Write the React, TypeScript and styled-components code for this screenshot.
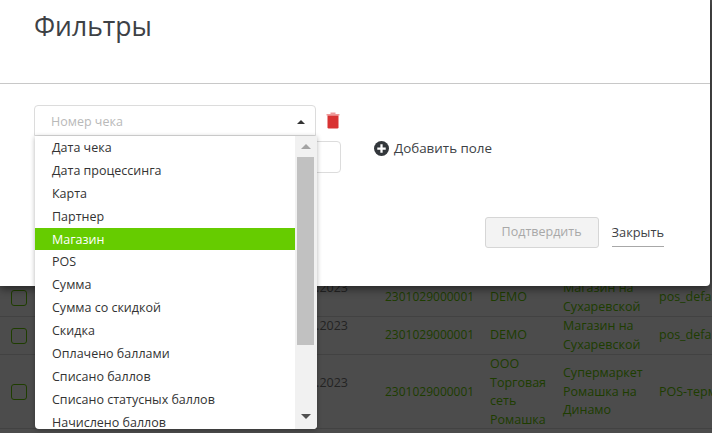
import styled, { createGlobalStyle } from "styled-components";

const GlobalStyle = createGlobalStyle`
  html, body {
    margin: 0;
    padding: 0;
    height: 100%;
    overflow: hidden;
    background: #fff;
    font-family: "Open Sans", "Liberation Sans", sans-serif;
  }
  * {
    box-sizing: border-box;
  }
`;

const Page = styled.div`
  position: relative;
  width: 712px;
  height: 433px;
  overflow: hidden;
`;

const TableBox = styled.div`
  padding-top: 279px;
  color: #66cc00;
  font-size: 12.5px;
  line-height: 18.5px;
`;

const Row = styled.div<{ $height: number }>`
  display: grid;
  grid-template-columns: 11px 16px 321px 37px 105px 73px 96px 1fr;
  height: ${(props) => props.$height}px;
  align-items: center;
  border-bottom: 1px solid #dedede;
  overflow: hidden;
`;

const CheckCell = styled.span`
  grid-column: 2;
  width: 16px;
  height: 16px;
  border: 1px solid #66cc00;
  border-radius: 3px;
  background: #fff;
`;

const DateCell = styled.span`
  grid-column: 3;
  justify-self: end;
  color: #777;
  white-space: pre-line;
`;

const NumberCell = styled.span`
  grid-column: 5;
  font-size: 12px;
`;

const Cell = styled.span`
  white-space: pre-line;
`;

const PosCell = styled.span`
  white-space: nowrap;
`;

const Backdrop = styled.div`
  position: absolute;
  inset: 0;
  background: rgba(0, 0, 0, 0.7);
`;

const Modal = styled.div`
  position: absolute;
  top: 0;
  left: 0;
  width: 710px;
  height: 286px;
  background: #fff;
  border-radius: 0 0 4px 0;
  box-shadow: 0 3px 9px rgba(0, 0, 0, 0.5);
`;

const ModalHead = styled.header`
  height: 84px;
  padding: 8px 34px 0;
  border-bottom: 1px solid #c8c8c8;
`;

const Title = styled.h1`
  margin: 0;
  font-size: 26.5px;
  line-height: 36px;
  font-weight: 400;
  color: #3d4145;
`;

const ModalBody = styled.div`
  display: grid;
  grid-template-columns: 282px 1fr;
  padding: 21px 0 0 34px;
`;

const FieldColumn = styled.div`
  display: flex;
  flex-direction: column;
  gap: 5px;
`;

const SelectBox = styled.div`
  display: flex;
  align-items: center;
  justify-content: space-between;
  width: 282px;
  height: 31px;
  padding: 2px 10px 0 16px;
  border: 1px solid #dcdcdc;
  border-radius: 4px 4px 0 0;
  font-size: 12.5px;
  color: #b9b9b9;
`;

const Caret = styled.span`
  width: 0;
  height: 0;
  border-left: 4px solid transparent;
  border-right: 4px solid transparent;
  border-bottom: 4px solid #333;
`;

const ValueBox = styled.div`
  align-self: flex-end;
  width: 70px;
  height: 32px;
  margin-right: -25px;
  border: 1px solid #dcdcdc;
  border-radius: 4px;
`;

const Actions = styled.div`
  display: grid;
  grid-template-columns: 40px 1fr;
`;

const TrashButton = styled.span`
  display: flex;
  padding: 7px 0 0 10px;
`;

const AddField = styled.div`
  display: flex;
  align-items: center;
  gap: 5px;
  grid-column: 2;
  margin: 18px 0 0 18px;
  font-size: 13.4px;
  color: #3d4145;
`;

const Footer = styled.footer`
  display: flex;
  align-items: flex-start;
  justify-content: flex-end;
  gap: 13px;
  padding: 44px 46px 0 0;
`;

const ConfirmButton = styled.button`
  width: 114px;
  height: 31px;
  background: #f3f3f3;
  border: 1px solid #d6d6d6;
  border-radius: 3px;
  font: 400 12.5px "Open Sans", sans-serif;
  color: #a8a8a8;
  padding: 0 0 3px;
`;

const CloseLink = styled.a`
  display: block;
  height: 30px;
  padding-top: 6px;
  font-size: 12.8px;
  color: #3d4145;
  border-bottom: 1px solid #a8a8a8;
`;

const Dropdown = styled.div`
  position: absolute;
  top: 136px;
  left: 35px;
  width: 282px;
  height: 293px;
  display: flex;
  background: #fff;
  border-radius: 0 0 4px 4px;
  box-shadow: 0 1px 5px rgba(0, 0, 0, 0.3);
  overflow: hidden;
`;

const OptionList = styled.ul`
  flex: 1;
  margin: 0;
  padding: 0;
  list-style: none;
  overflow: hidden;
`;

const Option = styled.li<{ $active?: boolean }>`
  height: 22.9px;
  line-height: 22.9px;
  padding: 1px 0 0 17px;
  font-size: 12.5px;
  color: ${(props) => (props.$active ? "#fff" : "#333")};
  background: ${(props) => (props.$active ? "#66cc00" : "transparent")};
`;

const ScrollBar = styled.div`
  display: flex;
  flex-direction: column;
  width: 22px;
  background: #f1f1f1;
`;

const ScrollArrow = styled.span<{ $bottom?: boolean }>`
  display: flex;
  align-items: center;
  justify-content: center;
  height: 21px;
  margin-bottom: ${(props) => (props.$bottom ? "2px" : "0")};
`;

const ScrollThumb = styled.div`
  width: 17px;
  height: 188px;
  margin-left: 2px;
  background: #c1c1c1;
`;

const ScrollSpacer = styled.div`
  flex: 1;
`;

const ArrowGlyph = styled.span<{ $down?: boolean; $color: string }>`
  width: 0;
  height: 0;
  border-left: 5px solid transparent;
  border-right: 5px solid transparent;
  ${(props) =>
    props.$down
      ? `border-top: 5px solid ${props.$color};`
      : `border-bottom: 5px solid ${props.$color};`}
`;

const options = [
  "Дата чека",
  "Дата процессинга",
  "Карта",
  "Партнер",
  "Магазин",
  "POS",
  "Сумма",
  "Сумма со скидкой",
  "Скидка",
  "Оплачено баллами",
  "Списано баллов",
  "Списано статусных баллов",
  "Начислено баллов",
];

const rows = [
  { height: 38, org: "DEMO", shop: "Магазин на\nСухаревской", pos: "pos_default" },
  { height: 38, org: "DEMO", shop: "Магазин на\nСухаревской", pos: "pos_default" },
  {
    height: 74,
    org: "ООО\nТорговая\nсеть\nРомашка",
    shop: "Супермаркет\nРомашка на\nДинамо",
    pos: "POS-терминал",
  },
];

function App() {
  return (
    <Page>
      <GlobalStyle />
      <TableBox>
        {rows.map((row, i) => (
          <Row key={i} $height={row.height}>
            <CheckCell />
            <DateCell>{"10.01.2023\n12:48"}</DateCell>
            <NumberCell>2301029000001</NumberCell>
            <Cell>{row.org}</Cell>
            <Cell>{row.shop}</Cell>
            <PosCell>{row.pos}</PosCell>
          </Row>
        ))}
      </TableBox>
      <Backdrop />
      <Modal>
        <ModalHead>
          <Title>Фильтры</Title>
        </ModalHead>
        <ModalBody>
          <FieldColumn>
            <SelectBox>
              Номер чека
              <Caret />
            </SelectBox>
            <ValueBox />
          </FieldColumn>
          <Actions>
            <TrashButton>
              <svg width="14" height="17" viewBox="0 0 14 17">
                <path d="M4.5 0.5h5v1.5h-5z" fill="#ee9a9a" />
                <path d="M0.5 2h13v1.5h-13z" fill="#ee9a9a" />
                <path d="M1.5 3.5h11v11.8a1.2 1.2 0 0 1-1.2 1.2H2.7a1.2 1.2 0 0 1-1.2-1.2z" fill="#d83232" />
              </svg>
            </TrashButton>
            <AddField>
              <svg width="15" height="15" viewBox="0 0 16 16">
                <circle cx="8" cy="8" r="8" fill="#33373b" />
                <path d="M3.5 8h9M8 3.5v9" stroke="#fff" strokeWidth="2.4" />
              </svg>
              Добавить поле
            </AddField>
          </Actions>
        </ModalBody>
        <Footer>
          <ConfirmButton disabled>Подтвердить</ConfirmButton>
          <CloseLink>Закрыть</CloseLink>
        </Footer>
      </Modal>
      <Dropdown>
        <OptionList>
          {options.map((option) => (
            <Option key={option} $active={option === "Магазин"}>
              {option}
            </Option>
          ))}
        </OptionList>
        <ScrollBar>
          <ScrollArrow>
            <ArrowGlyph $color="#a3a3a3" />
          </ScrollArrow>
          <ScrollThumb />
          <ScrollSpacer />
          <ScrollArrow $bottom>
            <ArrowGlyph $down $color="#505050" />
          </ScrollArrow>
        </ScrollBar>
      </Dropdown>
    </Page>
  );
}

export default App;
